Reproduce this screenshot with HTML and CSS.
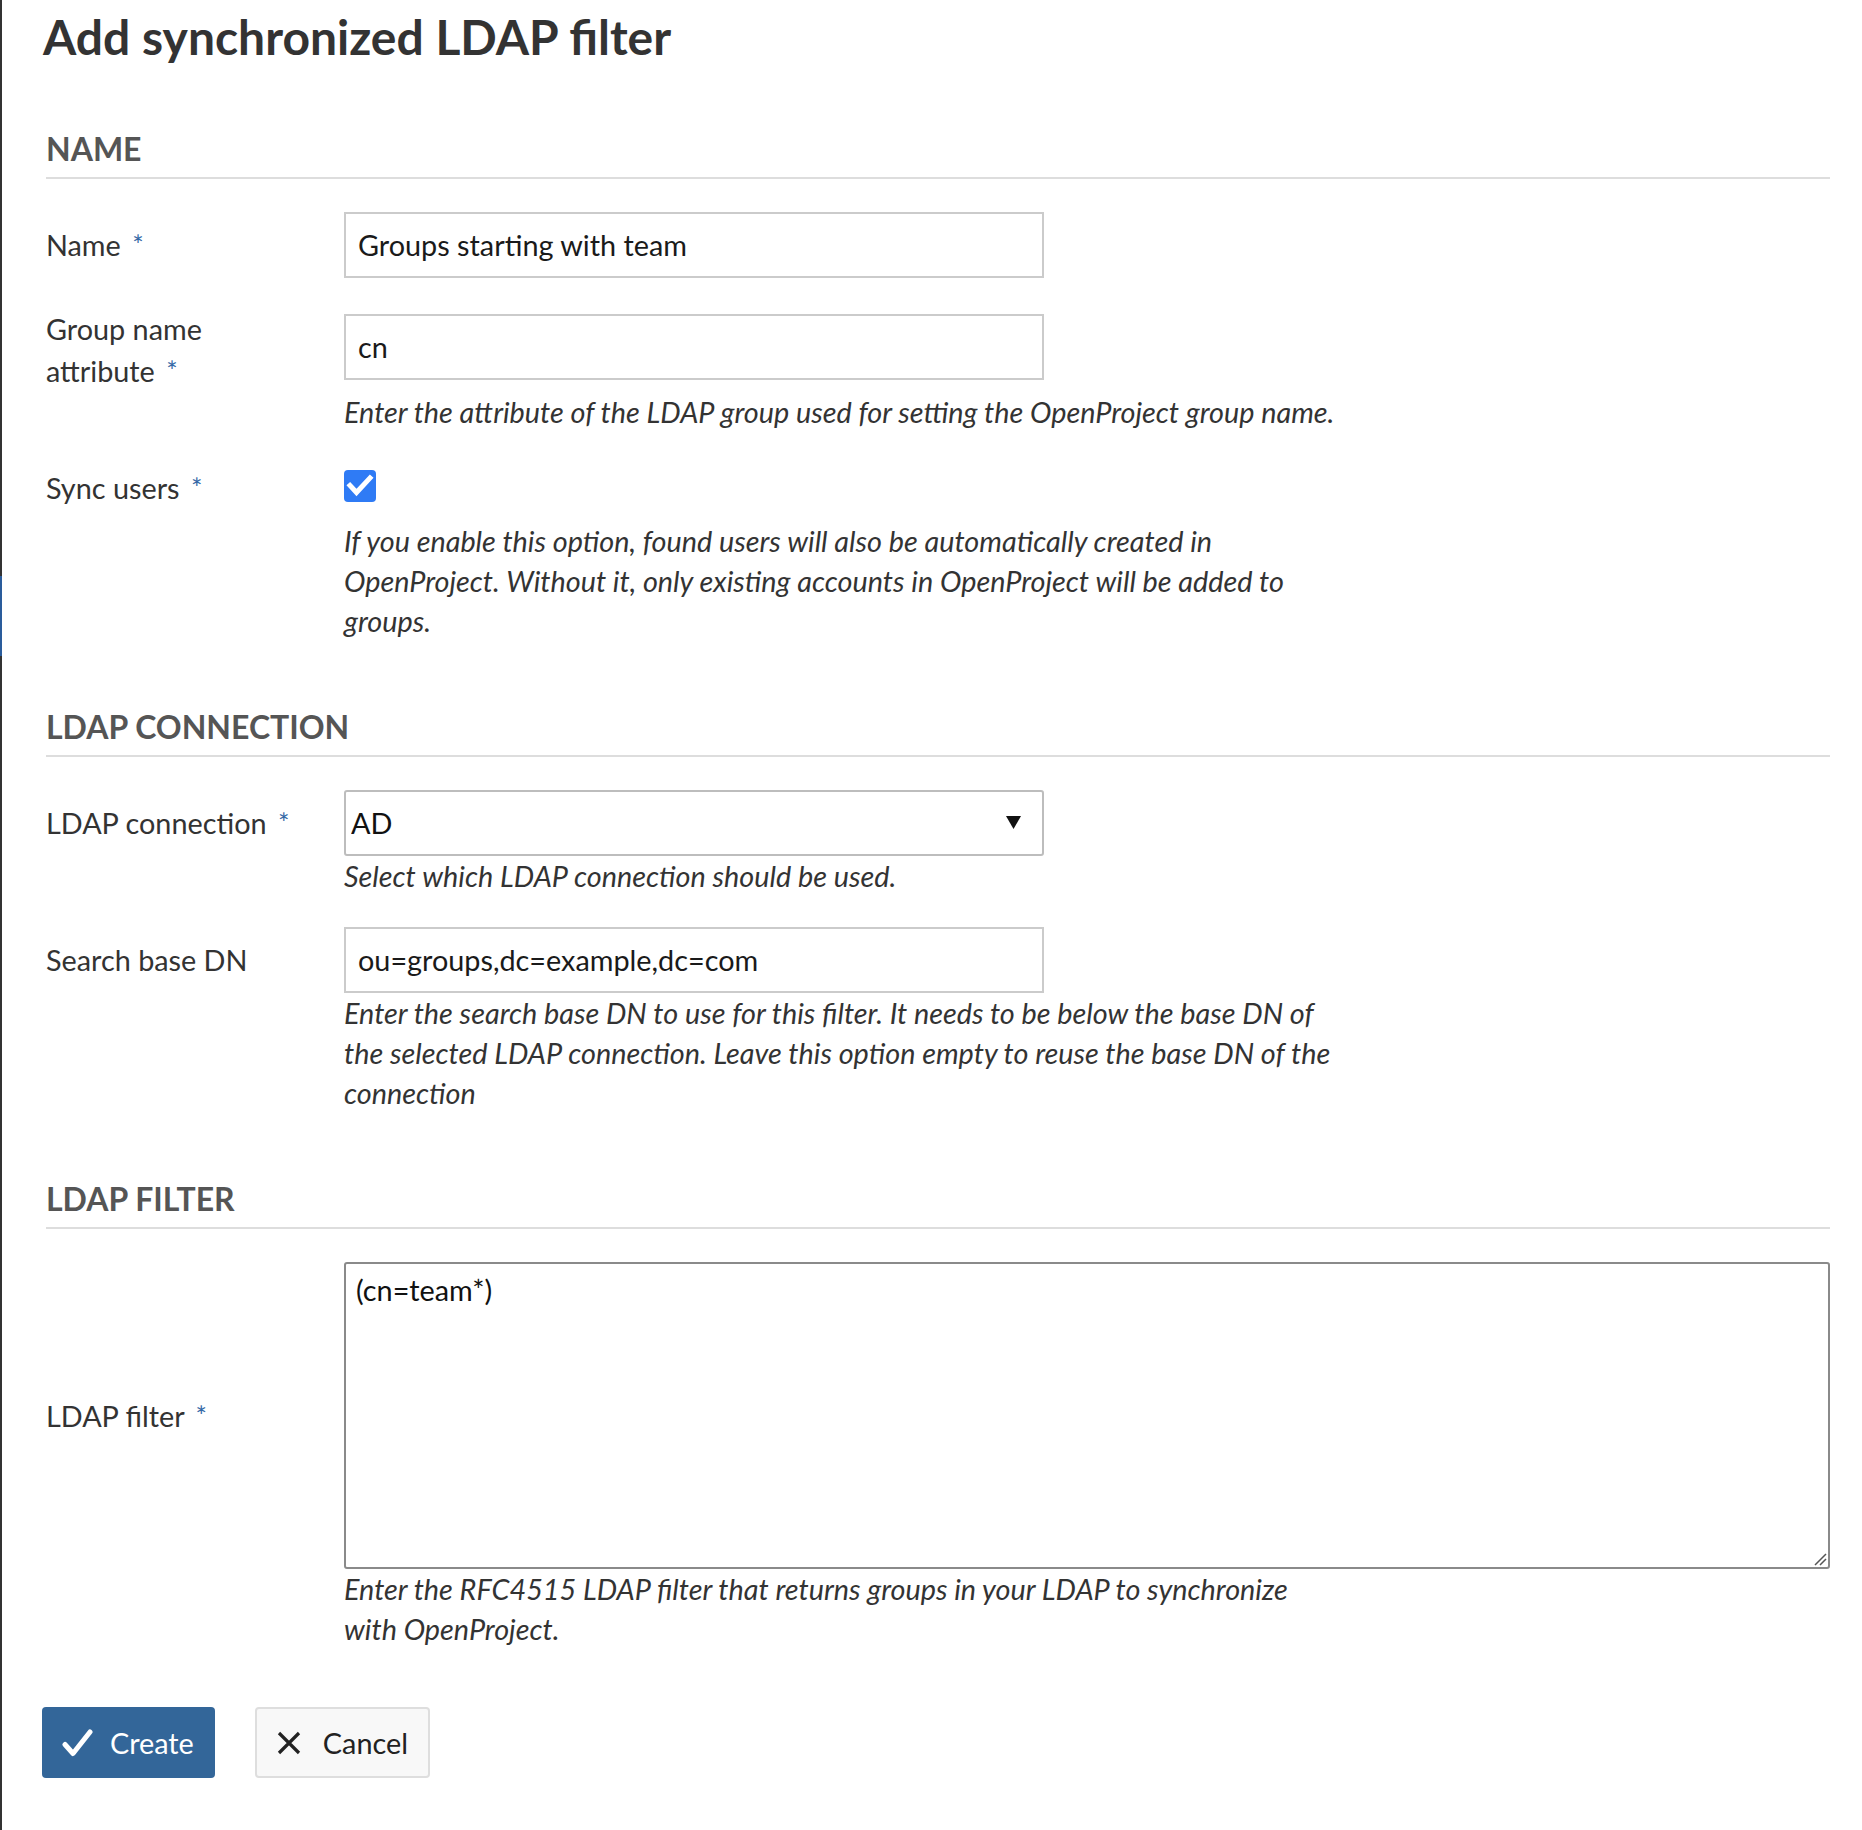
FILE: index.html
```html
<!DOCTYPE html>
<html lang="en">
<head>
<meta charset="utf-8">
<title>Add synchronized LDAP filter</title>
<link rel="stylesheet" href="styles.css">
</head>
<body>
<div class="page">
  <aside class="edge"></aside>
  <main class="content">
    <h1 class="title">Add synchronized LDAP filter</h1>

    <section class="section section--first">
      <h2 class="section-title">Name</h2>

      <div class="field">
        <div class="field-row">
          <label class="field-label" for="f-name">Name <span class="req">*</span></label>
          <input id="f-name" class="text-input" type="text" value="Groups starting with team">
        </div>
      </div>

      <div class="field">
        <div class="field-row field-row--multiline">
          <label class="field-label" for="f-attr">Group name<br>attribute <span class="req">*</span></label>
          <input id="f-attr" class="text-input" type="text" value="cn">
        </div>
        <p class="field-help">Enter the attribute of the LDAP group used for setting the OpenProject group name.</p>
      </div>

      <div class="field field--check">
        <div class="field-row field-row--check">
          <label class="field-label">Sync users <span class="req">*</span></label>
          <span class="checkbox">
            <svg width="32" height="32" viewBox="0 0 32 32" aria-hidden="true">
              <rect x="0" y="0" width="32" height="32" rx="4" fill="#2f7bf5"/>
              <path d="M6 15.5 L12.5 22.5 L26 8" fill="none" stroke="#fff" stroke-width="5" stroke-linecap="square"/>
            </svg>
          </span>
        </div>
        <p class="field-help field-help--check">If you enable this option, found users will also be automatically created in OpenProject. Without it, only existing accounts in OpenProject will be added to groups.</p>
      </div>
    </section>

    <section class="section">
      <h2 class="section-title">LDAP connection</h2>

      <div class="field">
        <div class="field-row">
          <label class="field-label" for="f-conn">LDAP connection <span class="req">*</span></label>
          <div class="select-wrap">
            <select id="f-conn" class="select-input">
              <option>AD</option>
            </select>
            <svg class="select-arrow" width="15" height="13" viewBox="0 0 15 13" aria-hidden="true">
              <path d="M0 0 H15 L7.5 13 Z" fill="#111"/>
            </svg>
          </div>
        </div>
        <p class="field-help">Select which LDAP connection should be used.</p>
      </div>

      <div class="field">
        <div class="field-row">
          <label class="field-label" for="f-base">Search base DN</label>
          <input id="f-base" class="text-input" type="text" value="ou=groups,dc=example,dc=com">
        </div>
        <p class="field-help">Enter the search base DN to use for this filter. It needs to be below the base DN of the selected LDAP connection. Leave this option empty to reuse the base DN of the connection</p>
      </div>
    </section>

    <section class="section">
      <h2 class="section-title">LDAP filter</h2>

      <div class="field">
        <div class="field-row field-row--wide">
          <label class="field-label" for="f-filter">LDAP filter <span class="req">*</span></label>
          <div class="textarea-wrap">
            <textarea id="f-filter" class="textarea-input">(cn=team*)</textarea>
            <svg class="resize-grip" width="14" height="14" viewBox="0 0 14 14" aria-hidden="true">
              <path d="M2 13 L13 2 M7 13 L13 7" fill="none" stroke="#555" stroke-width="1.5"/>
            </svg>
          </div>
        </div>
        <p class="field-help">Enter the RFC4515 LDAP filter that returns groups in your LDAP to synchronize with OpenProject.</p>
      </div>
    </section>

    <div class="actions">
      <button class="btn btn--primary" type="button">
        <svg width="31" height="32" viewBox="0 0 31 32" aria-hidden="true">
          <path d="M3 17.5 L11 26.5 L28 5" fill="none" stroke="#fff" stroke-width="5" stroke-linecap="round" stroke-linejoin="round"/>
        </svg>
        <span>Create</span>
      </button>
      <button class="btn btn--default" type="button">
        <svg width="24" height="24" viewBox="0 0 24 24" aria-hidden="true">
          <path d="M2 2 L22 22 M22 2 L2 22" fill="none" stroke="#222" stroke-width="3.2"/>
        </svg>
        <span>Cancel</span>
      </button>
    </div>
  </main>
</div>
</body>
</html>
```

FILE: styles.css
```css
* {
  box-sizing: border-box;
}

html, body {
  margin: 0;
  padding: 0;
  background: #fff;
}

body {
  font-family: Lato, "Noto Sans", "Liberation Sans", sans-serif;
  font-size: 28.8px;
  color: #333;
}

.page {
  display: flex;
  min-height: 1830px;
}

.edge {
  flex: 0 0 2px;
  background: linear-gradient(to bottom, #333 0, #333 576px, #2a5c9c 576px, #2a5c9c 656px, #333 656px, #333 100%);
}

.content {
  flex: 1;
  padding: 9px 32px 0 42px;
}

.title {
  margin: 0 0 0 -1px;
  font-size: 48px;
  line-height: 56px;
  font-weight: 700;
  color: #333;
}

.section {
  padding-left: 2px;
}

.section-title {
  margin: 68px 0 33px;
  padding: 0 0 10px;
  border-bottom: 2px solid #ddd;
  font-size: 32px;
  line-height: 36px;
  font-weight: 700;
  color: #555;
  text-transform: uppercase;
}

.section--first .section-title {
  margin-top: 66px;
}

.field + .field {
  margin-top: 31px;
}

.field + .field--check {
  margin-top: 28px;
}

.field-row {
  display: grid;
  grid-template-columns: 298px 700px;
  align-items: center;
}

.field-row--wide {
  grid-template-columns: 298px 1fr;
}

.field-row--multiline .text-input {
  margin-bottom: 7px;
}

.field-row--check {
  min-height: 56px;
}

.field-label {
  line-height: 41px;
  color: #333;
}

.req {
  margin-left: 4px;
  font-size: 27px;
  color: #3468a6;
  vertical-align: 1px;
}

.text-input {
  height: 66px;
  width: 700px;
  margin: 0;
  padding: 0 12px;
  border: 2px solid #cbcbcb;
  border-radius: 0;
  font-family: inherit;
  font-size: 28.8px;
  color: #1a1a1a;
  background: #fff;
  outline: none;
}

.checkbox {
  display: flex;
  width: 32px;
  height: 32px;
  margin-bottom: 4px;
}

.field-help {
  margin: 0 0 0 298px;
  max-width: 997px;
  font-style: italic;
  line-height: 40px;
  color: #333;
}

.field-help--check {
  margin-top: 5px;
}

.select-wrap {
  position: relative;
  width: 700px;
  height: 66px;
}

.select-input {
  appearance: none;
  -webkit-appearance: none;
  width: 100%;
  height: 66px;
  margin: 0;
  padding: 0 40px 0 5px;
  border: 2px solid #bdbdbd;
  border-radius: 3px;
  font-family: inherit;
  font-size: 28.8px;
  color: #111;
  background: #fff;
  outline: none;
}

.select-arrow {
  position: absolute;
  right: 23px;
  top: 26px;
  pointer-events: none;
}

.textarea-wrap {
  position: relative;
}

.textarea-input {
  display: block;
  width: 100%;
  height: 307px;
  margin: 0;
  padding: 6px 10px;
  border: 2px solid #8a8a8a;
  border-radius: 3px;
  font-family: inherit;
  font-size: 28.8px;
  line-height: 40px;
  color: #111;
  background: #fff;
  outline: none;
  resize: none;
}

.resize-grip {
  position: absolute;
  right: 3px;
  bottom: 3px;
  pointer-events: none;
}

.actions {
  display: flex;
  gap: 40px;
  margin: 58px 0 0 -2px;
}

.btn {
  display: flex;
  align-items: center;
  height: 71px;
  margin: 0;
  border-radius: 4px;
  font-family: inherit;
  font-size: 28.8px;
  cursor: pointer;
}

.btn--primary {
  gap: 17px;
  padding: 0 21px 0 20px;
  border: 0;
  background: #336699;
  color: #fff;
}

.btn--default {
  gap: 22px;
  padding: 0 20px;
  border: 2px solid #dedede;
  background: #f8f8f8;
  color: #222;
}
```
